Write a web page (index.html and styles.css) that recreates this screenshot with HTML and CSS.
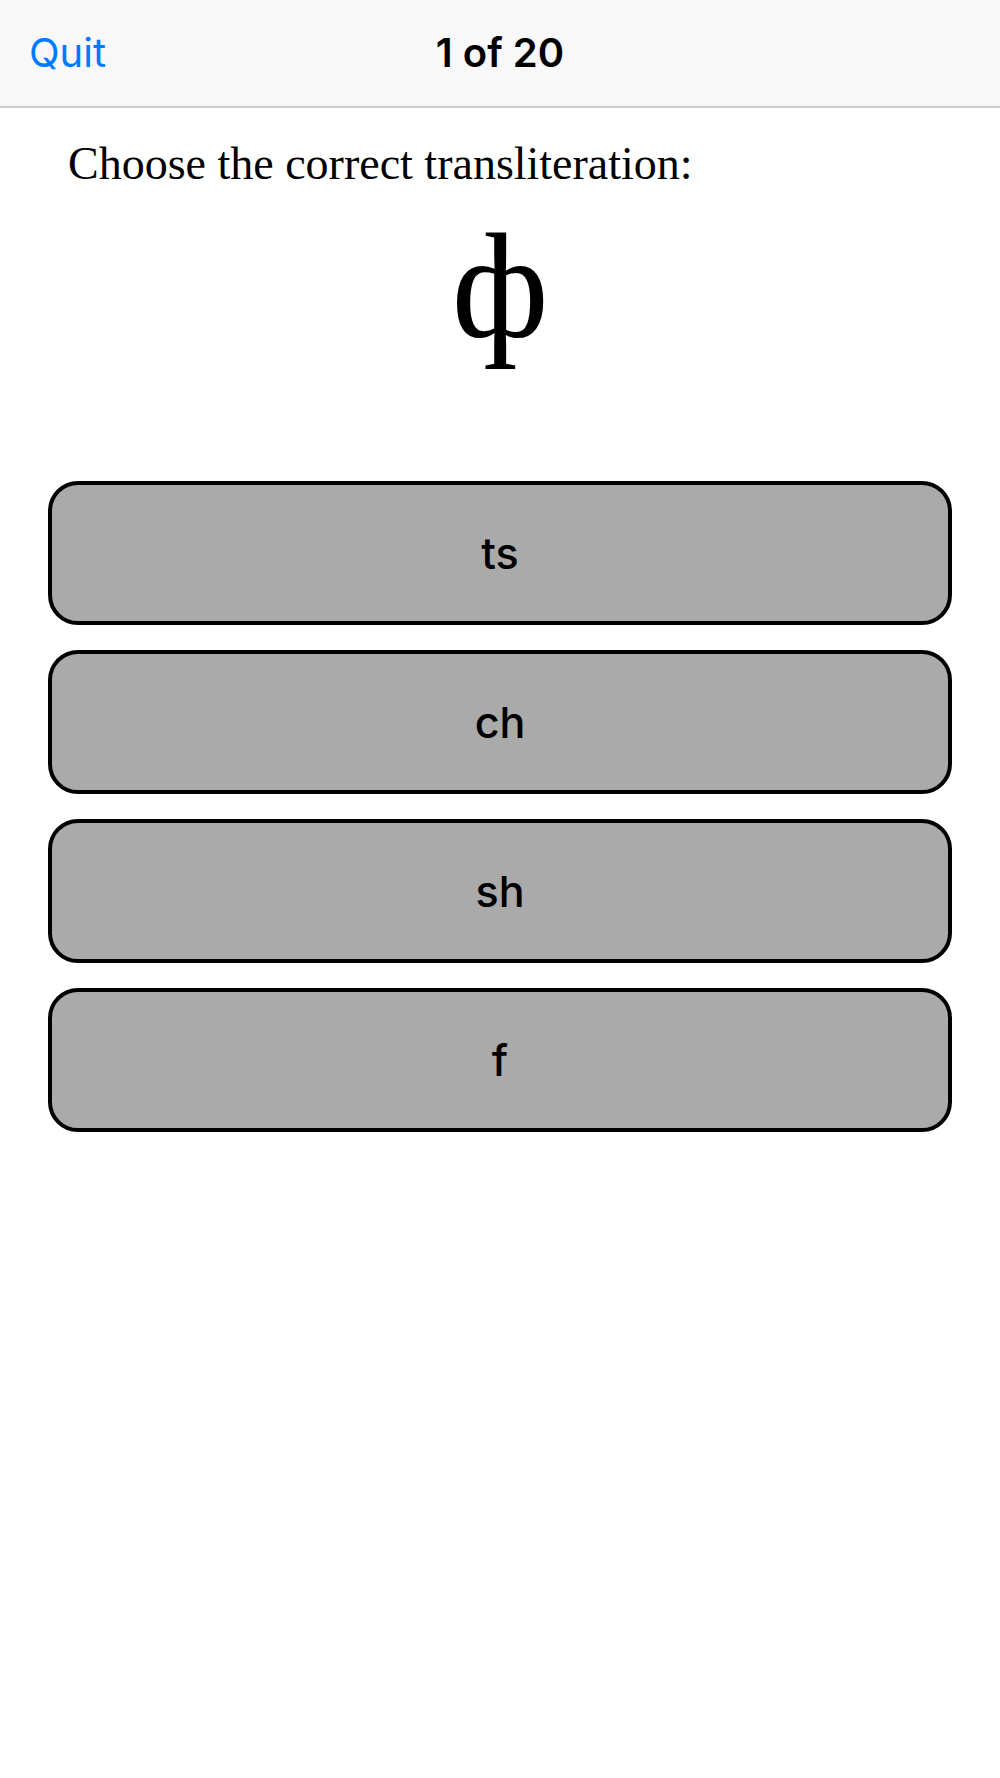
FILE: index.html
```html
<!DOCTYPE html>
<html lang="en">
<head>
<meta charset="utf-8">
<meta name="viewport" content="width=device-width, initial-scale=1">
<title>Transliteration Quiz</title>
<link rel="stylesheet" href="styles.css">
</head>
<body>
<header class="nav">
  <button class="quit" type="button">Quit</button>
  <h1 class="progress">1 of 20</h1>
</header>
<main class="quiz">
  <p class="prompt">Choose the correct transliteration:</p>
  <p class="letter" lang="ru">ф</p>
  <div class="answers">
    <button class="answer" type="button">ts</button>
    <button class="answer" type="button">ch</button>
    <button class="answer" type="button">sh</button>
    <button class="answer" type="button">f</button>
  </div>
</main>
</body>
</html>
```
FILE: styles.css
```css
* {
  box-sizing: border-box;
}

body {
  margin: 0;
  background: #fff;
  color: #000;
  font-family: Inter, "Liberation Sans", sans-serif;
}

.nav {
  display: grid;
  grid-template-columns: 1fr auto 1fr;
  align-items: center;
  height: 108px;
  padding: 0 29px;
  background: #f8f8f8;
  border-bottom: 2px solid #ccc;
}

.quit {
  justify-self: start;
  padding: 0;
  border: 0;
  background: none;
  color: #007aff;
  font: 400 40px/52px Inter, "Liberation Sans", sans-serif;
}

.progress {
  margin: 0;
  font-size: 40px;
  line-height: 52px;
  font-weight: 600;
}

.quiz {
  padding: 30px 48px;
}

.prompt {
  margin: 0;
  padding: 0 20px;
  font: 46px/52px "Liberation Serif", serif;
}

.letter {
  margin: 0 0 99px;
  text-align: center;
  font: 150px/192px "Liberation Serif", serif;
}

.answers {
  display: grid;
  gap: 25px;
}

.answer {
  height: 144px;
  border: 4px solid #000;
  border-radius: 30px;
  background: #aaa;
  color: #000;
  font: 500 43px/52px Inter, "Liberation Sans", sans-serif;
}
```
